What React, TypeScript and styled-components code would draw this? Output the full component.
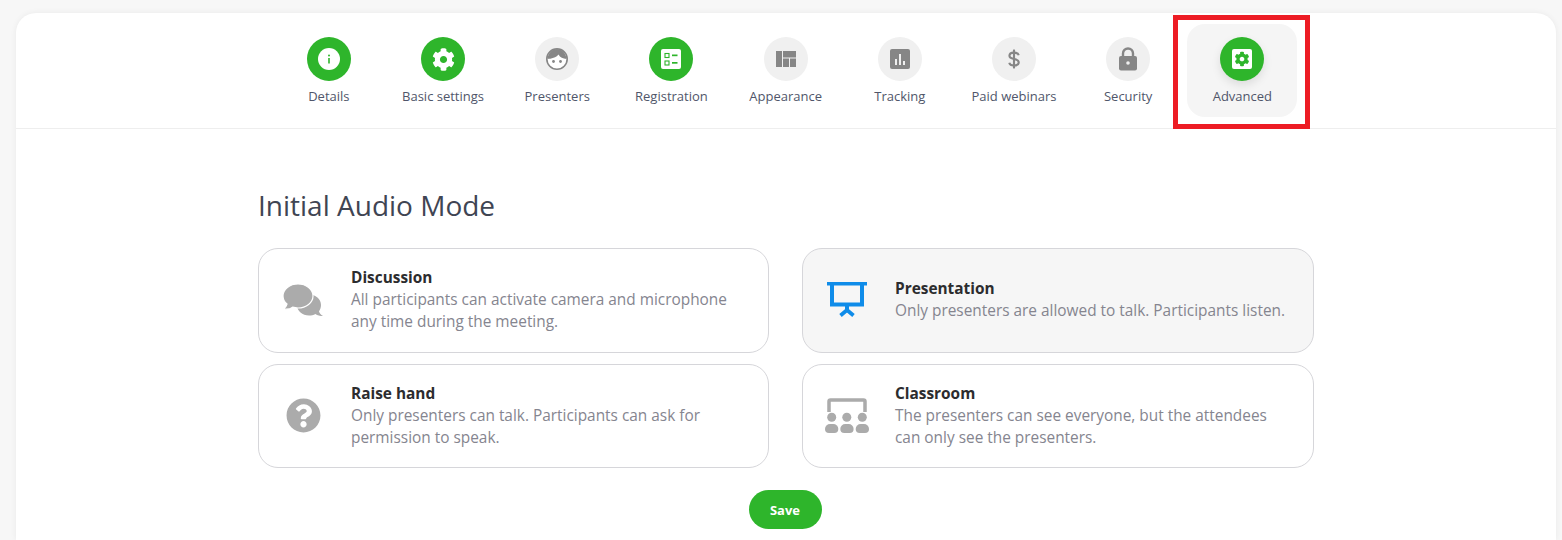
import { styled, createGlobalStyle } from 'styled-components';
import { FaCog, FaQuestionCircle } from 'react-icons/fa';

const GREEN = '#2eb52b';
const GREY = '#868686';
const LIGHT_GREY = '#ababab';

const GlobalStyle = createGlobalStyle`
  html, body {
    margin: 0;
    height: 100%;
    overflow: hidden;
    background: #f7f7f7;
    font-family: "Open Sans", "Liberation Sans", sans-serif;
  }
`;

const Page = styled.div`
  padding: 13px 6px 0 16px;
`;

const Card = styled.div`
  background: #fff;
  border-radius: 20px 20px 0 0;
  box-shadow: 0 0 6px rgba(0, 0, 0, 0.06);
  height: 527px;
`;

const TabBar = styled.nav`
  display: flex;
  justify-content: center;
  height: 115px;
  border-bottom: 1px solid #eeeeee;
  padding-right: 0.8px;
`;

const Tab = styled.div`
  position: relative;
  width: 114.2px;
  display: flex;
  flex-direction: column;
  align-items: center;
  padding-top: 24px;
  box-sizing: border-box;
  color: #50566a;
  font-size: 13px;
  line-height: 18px;
`;

const TabHighlight = styled.div`
  position: absolute;
  top: 11px;
  left: 2px;
  width: 110px;
  height: 93px;
  border-radius: 18px;
  background: #f5f5f5;
`;

const RedFrame = styled.div`
  position: absolute;
  top: 2px;
  left: -12px;
  width: 137px;
  height: 114px;
  box-sizing: border-box;
  border: 5px solid #ed1c24;
  z-index: 2;
`;

const Badge = styled.div<{ $on?: boolean; $lifted?: boolean }>`
  position: relative;
  width: 44px;
  height: 44px;
  border-radius: 50%;
  display: flex;
  align-items: center;
  justify-content: center;
  background: ${(p) => (p.$on ? GREEN : '#f0f0f0')};
  box-shadow: ${(p) => (p.$lifted ? '0 4px 10px rgba(0, 0, 0, 0.1)' : 'none')};
  margin-bottom: 6px;
`;

const TabLabel = styled.span`
  position: relative;
  white-space: nowrap;
`;

const Content = styled.main`
  width: 1056px;
  margin-left: 242px;
  padding-top: 56px;
`;

const Heading = styled.h1`
  margin: 0 0 23px;
  font-size: 28px;
  line-height: 40px;
  font-weight: 400;
  color: #3f4553;
`;

const ModeGrid = styled.div`
  display: grid;
  grid-template-columns: 511px 512px;
  grid-template-rows: 105px 104px;
  column-gap: 33px;
  row-gap: 11px;
`;

const Mode = styled.div<{ $selected?: boolean }>`
  display: flex;
  align-items: center;
  box-sizing: border-box;
  border: 1px solid #d6d6da;
  border-radius: 20px;
  background: ${(p) => (p.$selected ? '#f6f6f6' : '#fff')};
`;

const ModeIcon = styled.div`
  flex: none;
  box-sizing: border-box;
  width: 92px;
  padding: 0 4px 2px 0;
  display: flex;
  justify-content: center;
  color: ${LIGHT_GREY};
`;

const ModeText = styled.div`
  flex: 1;
  padding: 0 20px 1px 0;
  font-size: 15.4px;
  line-height: 22px;
  color: #85858f;
`;

const ModeTitle = styled.div`
  font-weight: 700;
  color: #2c2c2e;
`;

const Actions = styled.div`
  display: flex;
  justify-content: center;
  padding: 22px 2px 0 0;
`;

const SaveButton = styled.button`
  width: 73px;
  height: 39px;
  padding: 0;
  border: 0;
  border-radius: 20px;
  background: ${GREEN};
  color: #fff;
  font: 700 13px "Open Sans", sans-serif;
`;

const InfoIcon = () => (
  <svg width="22" height="22" viewBox="0 0 22 22">
    <circle cx="11" cy="11" r="11" fill="#fff" />
    <circle cx="11" cy="7.500" r="1" fill={GREEN} />
    <rect x="10.200" y="10" width="1.600" height="5.500" fill={GREEN} />
  </svg>
);

const FaceIcon = () => (
  <svg width="22" height="22" viewBox="0 0 22 22">
    <circle cx="11" cy="11" r="10.200" fill="#fff" stroke={GREY} strokeWidth="1.600" />
    <path d="M1.500 11C2 5 6 1 11 1s9 4 9.500 10C17 10.500 14 9.500 12.500 6.500 10.500 9.500 5 10.800 1.500 11z" fill={GREY} />
    <circle cx="7.500" cy="13.500" r="1.400" fill={GREY} />
    <circle cx="14.500" cy="13.500" r="1.400" fill={GREY} />
  </svg>
);

const FormIcon = () => (
  <svg width="20" height="20" viewBox="0 0 20 20">
    <rect width="20" height="20" rx="2" fill="#fff" />
    <g fill="none" stroke={GREEN} strokeWidth="1.100">
      <rect x="4" y="4.500" width="4" height="4" />
      <rect x="4" y="12" width="4" height="4" />
    </g>
    <rect x="11" y="5.500" width="5.500" height="1.700" fill={GREEN} />
    <rect x="11" y="13" width="5.500" height="1.700" fill={GREEN} />
  </svg>
);

const LayoutIcon = () => (
  <svg width="20" height="16" viewBox="0 0 20 16" fill={GREY}>
    <rect x="0" y="0" width="6" height="16" />
    <rect x="7" y="0" width="13" height="6.500" />
    <rect x="7" y="7.500" width="6" height="8.500" />
    <rect x="14" y="7.500" width="6" height="8.500" />
  </svg>
);

const ChartIcon = () => (
  <svg width="20" height="20" viewBox="0 0 20 20">
    <rect width="20" height="20" rx="2" fill={GREY} />
    <rect x="5" y="10" width="2" height="6" fill="#f0f0f0" />
    <rect x="9" y="5" width="2" height="11" fill="#f0f0f0" />
    <rect x="13" y="12" width="2" height="4" fill="#f0f0f0" />
  </svg>
);

const DollarIcon = () => (
  <svg width="12" height="20" viewBox="0 0 14 22" fill="none" stroke={GREY} strokeWidth="2.500">
    <path d="M12.500 6.500C12 4.500 10 3.500 7 3.500 4 3.500 1.700 4.800 1.700 7.200 1.700 12.500 12.500 9.500 12.500 14.800 12.500 17.200 10 18.500 7 18.500 4 18.500 2 17.500 1.500 15.300" />
    <path d="M7 0v22" />
  </svg>
);

const LockIcon = () => (
  <svg width="20" height="24" viewBox="0 0 20 24">
    <path d="M5 10V6.500a5 5 0 0 1 10 0V10" fill="none" stroke={GREY} strokeWidth="2.400" />
    <rect x="1" y="9" width="18" height="14.500" rx="2" fill={GREY} />
    <circle cx="10" cy="16" r="1.800" fill="#f0f0f0" />
  </svg>
);

const AdvancedIcon = () => (
  <svg width="20" height="20" viewBox="0 0 20 20">
    <rect width="20" height="20" rx="2" fill="#fff" />
    <g transform="translate(2.500 2.500) scale(0.0293)">
      <path
        fill={GREEN}
        d="M487.400 315.700l-42.600-24.600c4.300-23.200 4.300-47 0-70.200l42.600-24.600c4.900-2.800 7.100-8.600 5.500-14-11.100-35.600-30-67.800-54.700-94.600-3.800-4.100-10-5.100-14.800-2.300L380.800 110c-17.900-15.400-38.500-27.300-60.800-35.100V25.800c0-5.600-3.900-10.500-9.400-11.700-36.700-8.200-74.300-7.800-109.200 0-5.500 1.200-9.400 6.100-9.400 11.700V75c-22.200 7.900-42.800 19.800-60.800 35.100L88.700 85.500c-4.900-2.800-11-1.900-14.800 2.300-24.700 26.700-43.600 58.900-54.700 94.600-1.700 5.400.600 11.200 5.500 14L67.300 221c-4.300 23.200-4.300 47 0 70.200l-42.600 24.600c-4.900 2.800-7.100 8.600-5.500 14 11.100 35.600 30 67.800 54.700 94.600 3.800 4.100 10 5.100 14.800 2.300l42.600-24.600c17.900 15.400 38.500 27.300 60.800 35.100v49.200c0 5.600 3.900 10.500 9.400 11.700 36.700 8.200 74.300 7.800 109.200 0 5.500-1.200 9.400-6.100 9.400-11.700v-49.200c22.200-7.900 42.800-19.800 60.800-35.100l42.600 24.600c4.900 2.800 11 1.900 14.800-2.300 24.700-26.700 43.600-58.900 54.700-94.600 1.500-5.500-.700-11.300-5.600-14.100zM256 336c-44.100 0-80-35.900-80-80s35.900-80 80-80 80 35.900 80 80-35.900 80-80 80z"
      />
    </g>
  </svg>
);

const BubblesIcon = () => (
  <svg width="40" height="32" viewBox="0 0 40 32" fill={LIGHT_GREY}>
    <path d="M26 10.500c6.500 0 12 4.500 12 10.500 0 2.500-.800 4.500-2 6.300.300 1.800 1.700 3.500 4 4.700-3 0-5.700-.500-7.500-2-2 1-4.200 1.500-6.500 1.500-6.500 0-12-4.500-12-10.500s5.500-10.500 12-10.500z" />
    <path
      d="M15 0c8.300 0 15 5.400 15 12s-6.700 12-15 12c-1.900 0-3.700-.300-5.400-.800C7.800 24.700 4.300 25.500.500 25c1.800-1.200 3-3 3.500-5C1.500 18 0 15.200 0 12 0 5.400 6.700 0 15 0z"
      stroke="#fff"
      strokeWidth="1.200"
    />
  </svg>
);

const ScreenIcon = () => (
  <svg width="40" height="35" viewBox="0 0 40 35" fill="#0f8ce9">
    <rect x="0" y="0" width="40" height="3.500" />
    <path d="M3 3h4v17.500h26V3h4v21.500H3z" />
    <rect x="18" y="24" width="4" height="4" />
    <path d="M13.500 33.500L20 28l6.500 5.500" fill="none" stroke="#0f8ce9" strokeWidth="3.800" />
  </svg>
);

const ClassroomIcon = () => (
  <svg width="44" height="35" viewBox="0 0 44 35" fill={LIGHT_GREY}>
    <path d="M4 14V3.500A1.500 1.500 0 0 1 5.500 2h33A1.500 1.500 0 0 1 40 3.500V14" fill="none" stroke={LIGHT_GREY} strokeWidth="3.500" />
    <circle cx="6.700" cy="19.300" r="4.500" />
    <circle cx="21.800" cy="19.300" r="4.500" />
    <circle cx="37.300" cy="19.300" r="4.500" />
    <path d="M0 31a5 5 0 0 1 5-5h3.300a5 5 0 0 1 5 5 4 4 0 0 1-4 4H4a4 4 0 0 1-4-4z" />
    <path d="M15.300 31a5 5 0 0 1 5-5h3.300a5 5 0 0 1 5 5 4 4 0 0 1-4 4h-5.300a4 4 0 0 1-4-4z" />
    <path d="M30.700 31a5 5 0 0 1 5-5H39a5 5 0 0 1 5 5 4 4 0 0 1-4 4h-5.300a4 4 0 0 1-4-4z" />
  </svg>
);

const tabs = [
  { label: 'Details', on: true, icon: <InfoIcon /> },
  { label: 'Basic settings', on: true, icon: <FaCog size={23} color="#fff" /> },
  { label: 'Presenters', on: false, icon: <FaceIcon /> },
  { label: 'Registration', on: true, icon: <FormIcon /> },
  { label: 'Appearance', on: false, icon: <LayoutIcon /> },
  { label: 'Tracking', on: false, icon: <ChartIcon /> },
  { label: 'Paid webinars', on: false, icon: <DollarIcon /> },
  { label: 'Security', on: false, icon: <LockIcon /> },
  { label: 'Advanced', on: true, icon: <AdvancedIcon />, active: true },
];

const modes = [
  {
    title: 'Discussion',
    text: 'All participants can activate camera and microphone any time during the meeting.',
    icon: <BubblesIcon />,
  },
  {
    title: 'Presentation',
    text: 'Only presenters are allowed to talk. Participants listen.',
    icon: <ScreenIcon />,
    selected: true,
  },
  {
    title: 'Raise hand',
    text: 'Only presenters can talk. Participants can ask for permission to speak.',
    icon: <FaQuestionCircle size={35} />,
  },
  {
    title: 'Classroom',
    text: 'The presenters can see everyone, but the attendees can only see the presenters.',
    icon: <ClassroomIcon />,
  },
];

export default function App() {
  return (
    <Page>
      <GlobalStyle />
      <Card>
        <TabBar>
          {tabs.map((tab) => (
            <Tab key={tab.label}>
              {tab.active && <TabHighlight />}
              {tab.active && <RedFrame />}
              <Badge $on={tab.on} $lifted={tab.active}>
                {tab.icon}
              </Badge>
              <TabLabel>{tab.label}</TabLabel>
            </Tab>
          ))}
        </TabBar>
        <Content>
          <Heading>Initial Audio Mode</Heading>
          <ModeGrid>
            {modes.map((mode) => (
              <Mode key={mode.title} $selected={mode.selected}>
                <ModeIcon>{mode.icon}</ModeIcon>
                <ModeText>
                  <ModeTitle>{mode.title}</ModeTitle>
                  {mode.text}
                </ModeText>
              </Mode>
            ))}
          </ModeGrid>
          <Actions>
            <SaveButton>Save</SaveButton>
          </Actions>
        </Content>
      </Card>
    </Page>
  );
}
